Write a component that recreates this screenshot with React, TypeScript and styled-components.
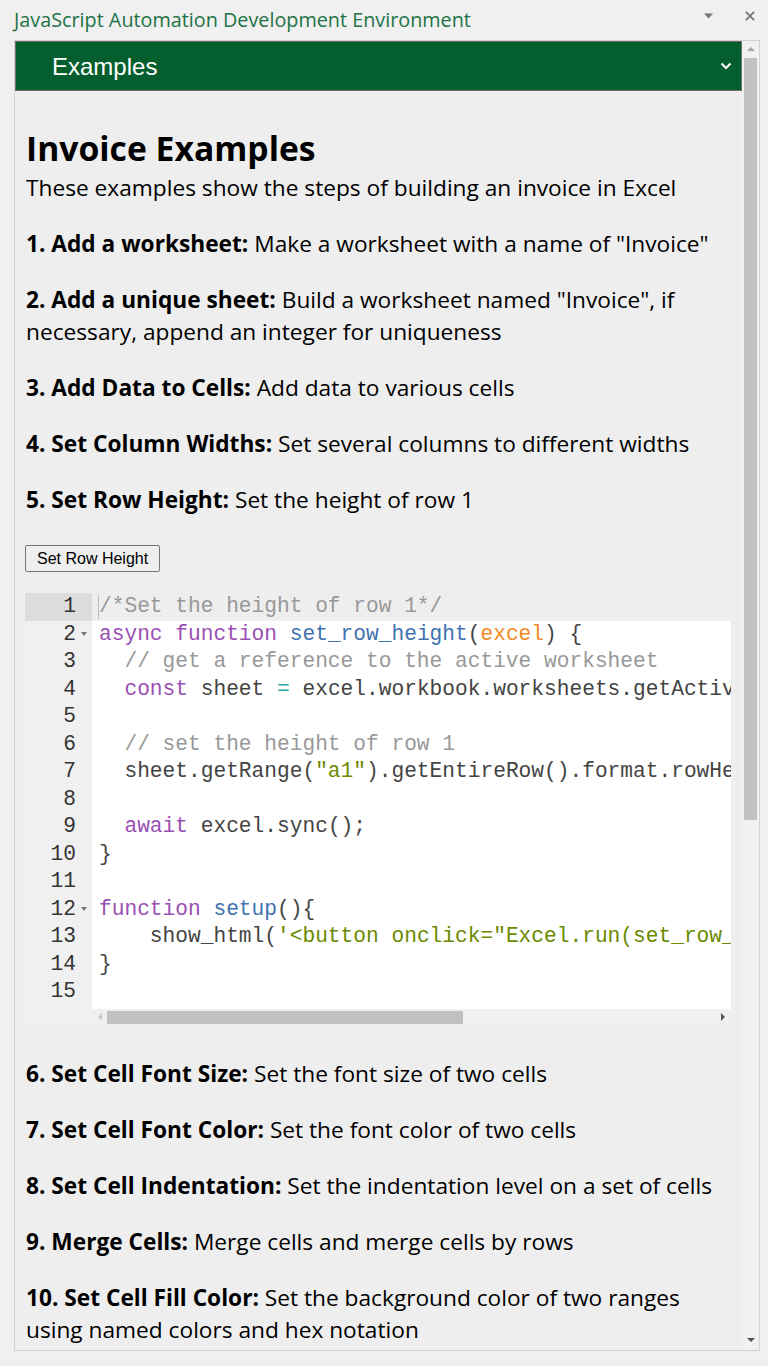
import React from "react";
import styled, { createGlobalStyle } from "styled-components";

const Global = createGlobalStyle`
  html, body { margin: 0; padding: 0; background: #f0f0f0; }
  body { width: 768px; height: 1366px; overflow: hidden; }
`;

const Page = styled.div`
  width: 768px;
  height: 1366px;
  display: flex;
  flex-direction: column;
  background: #f0f0f0;
`;

const TitleBar = styled.div`
  height: 40px;
  display: flex;
  align-items: center;
  padding: 0 13px 0 14px;
  box-sizing: border-box;
`;

const Title = styled.div`
  flex: 1;
  font-family: "Open Sans", "Noto Sans", sans-serif;
  font-size: 19.8px;
  font-weight: 400;
  color: #217346;
  margin-top: -1px;
`;

const TitleIcons = styled.div`
  display: flex;
  align-items: center;
  gap: 32px;
  margin-top: -8px;
`;

const Panel = styled.div`
  margin-left: 14px;
  width: 746px;
  height: 1311px;
  border: 1px solid #d2d2d2;
  box-sizing: border-box;
  display: flex;
  background: #eeeeee;
`;

const Main = styled.div`
  flex: 1;
  display: flex;
  flex-direction: column;
  min-width: 0;
  overflow: hidden;
`;

const Header = styled.div`
  height: 50px;
  flex: none;
  box-sizing: border-box;
  border: 1px solid #6e6e6e;
  background: #055e2e;
  display: flex;
  align-items: center;
  padding: 0 9px 0 36px;
  font-family: "Liberation Sans", Arial, sans-serif;
  font-size: 24px;
  color: #ffffff;
`;

const HeaderLabel = styled.span`
  flex: 1;
  margin-top: 2px;
`;

const Content = styled.div`
  padding: 0 11px;
  font-family: "Open Sans", "Noto Sans", sans-serif;
  font-size: 22.7px;
  line-height: 32px;
  color: #000;
`;

const H1 = styled.h1`
  margin: 37px 0 4px;
  font-size: 33.7px;
  line-height: 40px;
  font-weight: 700;
`;

const P = styled.p`
  margin: 0 0 24px;
  b { font-weight: 700; }
`;

const ButtonRow = styled.div`
  margin: 29px 0 0 -1px;
  height: 27px;
  display: flex;
`;

const Btn = styled.button`
  height: 27px;
  box-sizing: border-box;
  padding: 0 11px;
  border: 1px solid #767676;
  border-radius: 2px;
  background: #efefef;
  font-family: "Liberation Sans", Arial, sans-serif;
  font-size: 16px;
  color: #000;
`;

const Editor = styled.div`
  margin: 21px 0 33px -1px;
  height: 432px;
  display: flex;
  background: #ffffff;
  font-family: "Liberation Mono", monospace;
  font-size: 21.2px;
  line-height: 27.5px;
`;

const Gutter = styled.div`
  width: 67px;
  flex: none;
  background: #f0f0f0;
  color: #333;
`;

const GutterCell = styled.div<{ $active?: boolean }>`
  height: 27.5px;
  position: relative;
  text-align: right;
  padding-right: 16px;
  background: ${(p) => (p.$active ? "#dcdcdc" : "transparent")};
`;

const Fold = styled.span`
  position: absolute;
  right: 5px;
  top: 11px;
  width: 0;
  height: 0;
  border-left: 3px solid transparent;
  border-right: 3px solid transparent;
  border-top: 4px solid #777;
`;

const CodeCol = styled.div`
  flex: 1;
  display: flex;
  flex-direction: column;
  min-width: 0;
`;

const Lines = styled.div`
  flex: 1;
  overflow: hidden;
`;

const Line = styled.div<{ $active?: boolean }>`
  height: 27.5px;
  white-space: pre;
  padding-left: 7px;
  color: #444;
  position: relative;
  background: ${(p) => (p.$active ? "#eeeeee" : "transparent")};
`;

const Cursor = styled.span`
  position: absolute;
  left: 6px;
  top: 2px;
  width: 1px;
  height: 24px;
  background: #bbbbbb;
`;

const Cm = styled.span`color: #999999;`;
const Kw = styled.span`color: #9a4fb4;`;
const Fn = styled.span`color: #3f72b0;`;
const Pa = styled.span`color: #f08a24;`;
const St = styled.span`color: #6a8a00;`;
const Op = styled.span`color: #2fa4a4;`;

const HScroll = styled.div`
  height: 16px;
  flex: none;
  background: #f0f0f0;
  display: flex;
  align-items: center;
  padding: 0 6px;
  gap: 5px;
`;

const HThumb = styled.div`
  width: 356px;
  height: 13px;
  background: #c1c1c1;
`;

const Spacer = styled.div`flex: 1;`;

const VScroll = styled.div`
  width: 17px;
  flex: none;
  background: #f1f1f1;
  display: flex;
  flex-direction: column;
  align-items: center;
  padding: 6px 0 8px;
  box-sizing: border-box;
`;

const VThumb = styled.div`
  margin-top: 7px;
  width: 13px;
  height: 762px;
  background: #c1c1c1;
`;

const Tri = styled.div<{ $dir: "up" | "down" | "left" | "right"; $color: string }>`
  width: 0;
  height: 0;
  ${(p) =>
    p.$dir === "up"
      ? `border-left:4px solid transparent;border-right:4px solid transparent;border-bottom:4px solid ${p.$color};`
      : p.$dir === "down"
      ? `border-left:4px solid transparent;border-right:4px solid transparent;border-top:4px solid ${p.$color};`
      : p.$dir === "left"
      ? `border-top:4px solid transparent;border-bottom:4px solid transparent;border-right:4px solid ${p.$color};`
      : `border-top:4px solid transparent;border-bottom:4px solid transparent;border-left:4px solid ${p.$color};`}
`;

const items1: [string, string][] = [
  ["1. Add a worksheet:", ' Make a worksheet with a name of "Invoice"'],
  ["2. Add a unique sheet:", ' Build a worksheet named "Invoice", if necessary, append an integer for uniqueness'],
  ["3. Add Data to Cells:", " Add data to various cells"],
  ["4. Set Column Widths:", " Set several columns to different widths"],
  ["5. Set Row Height:", " Set the height of row 1"],
];

const items2: [string, string][] = [
  ["6. Set Cell Font Size:", " Set the font size of two cells"],
  ["7. Set Cell Font Color:", " Set the font color of two cells"],
  ["8. Set Cell Indentation:", " Set the indentation level on a set of cells"],
  ["9. Merge Cells:", " Merge cells and merge cells by rows"],
  ["10. Set Cell Fill Color:", " Set the background color of two ranges using named colors and hex notation"],
  ["11. Set Cell Borders:", " Add borders to a range of cells"],
];

const code: React.ReactNode[] = [
  <Cm>/*Set the height of row 1*/</Cm>,
  <>
    <Kw>async</Kw> <Kw>function</Kw> <Fn>set_row_height</Fn>(<Pa>excel</Pa>) {"{"}
  </>,
  <>
    {"  "}
    <Cm>// get a reference to the active worksheet</Cm>
  </>,
  <>
    {"  "}
    <Kw>const</Kw> sheet <Op>=</Op> excel.workbook.worksheets.getActiveWorksheet();
  </>,
  "",
  <>
    {"  "}
    <Cm>// set the height of row 1</Cm>
  </>,
  <>
    {"  "}sheet.getRange(<St>"a1"</St>).getEntireRow().format.rowHeight <Op>=</Op> 50;
  </>,
  "",
  <>
    {"  "}
    <Kw>await</Kw> excel.sync();
  </>,
  "}",
  "",
  <>
    <Kw>function</Kw> <Fn>setup</Fn>(){"{"}
  </>,
  <>
    {"    "}show_html(<St>'&lt;button onclick="Excel.run(set_row_height)"&gt;Set Row Height&lt;/button&gt;'</St>);
  </>,
  "}",
  "",
];

export default function App() {
  return (
    <Page>
      <Global />
      <TitleBar>
        <Title>JavaScript Automation Development Environment</Title>
        <TitleIcons>
          <svg width="9" height="6" viewBox="0 0 9 6">
            <path d="M0 0.5 L9 0.5 L4.5 5.5 Z" fill="#777" />
          </svg>
          <svg width="10" height="10" viewBox="0 0 10 10">
            <path d="M0.8 0.8 L9.2 9.2 M9.2 0.8 L0.8 9.2" stroke="#777" strokeWidth="1.8" />
          </svg>
        </TitleIcons>
      </TitleBar>
      <Panel>
        <Main>
          <Header>
            <HeaderLabel>Examples</HeaderLabel>
            <svg width="12" height="8" viewBox="0 0 12 8">
              <path d="M1.5 1.5 L6 6 L10.5 1.5" stroke="#fff" strokeWidth="2" fill="none" />
            </svg>
          </Header>
          <Content>
            <H1>Invoice Examples</H1>
            <P>These examples show the steps of building an invoice in Excel</P>
            {items1.map(([b, t]) => (
              <P key={b}>
                <b>{b}</b>
                {t}
              </P>
            ))}
            <ButtonRow>
              <Btn>Set Row Height</Btn>
            </ButtonRow>
            <Editor>
              <Gutter>
                {code.map((_, i) => (
                  <GutterCell key={i} $active={i === 0}>
                    {i + 1}
                    {(i === 1 || i === 11) && <Fold />}
                  </GutterCell>
                ))}
              </Gutter>
              <CodeCol>
                <Lines>
                  {code.map((c, i) => (
                    <Line key={i} $active={i === 0}>
                      {i === 0 && <Cursor />}
                      {c}
                    </Line>
                  ))}
                </Lines>
                <HScroll>
                  <Tri $dir="left" $color="#c8c8c8" />
                  <HThumb />
                  <Spacer />
                  <Tri $dir="right" $color="#555" />
                </HScroll>
              </CodeCol>
            </Editor>
            {items2.map(([b, t]) => (
              <P key={b}>
                <b>{b}</b>
                {t}
              </P>
            ))}
          </Content>
        </Main>
        <VScroll>
          <Tri $dir="up" $color="#a6a6a6" />
          <VThumb />
          <Spacer />
          <Tri $dir="down" $color="#505050" />
        </VScroll>
      </Panel>
    </Page>
  );
}
